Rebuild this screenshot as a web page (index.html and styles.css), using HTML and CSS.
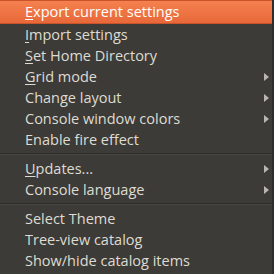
FILE: index.html
```html
<!DOCTYPE html>
<html lang="en">
  <head>
    <meta charset="UTF-8" />
    <title>Menu</title>
    <link rel="stylesheet" href="styles.css">
  </head>
  <body>
    <ul class="menu">
      <li class="item active"><u>E</u>xport current settings</li>
      <li class="item"><u>I</u>mport settings</li>
      <li class="item"><u>S</u>et Home Directory</li>
      <li class="item sub"><u>G</u>rid mode</li>
      <li class="item sub">Change layout</li>
      <li class="item sub">Console window colors</li>
      <li class="item">Enable fire effect</li>
      <li class="sep"></li>
      <li class="item sub"><u>U</u>pdates...</li>
      <li class="item sub">Console language</li>
      <li class="sep"></li>
      <li class="item">Select Theme</li>
      <li class="item">Tree-view catalog</li>
      <li class="item">Show/hide catalog items</li>
    </ul>
  </body>
</html>
```
FILE: styles.css
```css
body {
  margin: 0;
  background: #3c3b37;
}

.menu {
  list-style: none;
  margin: 0;
  padding: 2px 0 0 0;
  width: 272px;
  height: 272px;
  background: #3c3b37;
  border-right: 2px solid #2e2d2a;
  font-family: "Open Sans", "Noto Sans", sans-serif;
  font-size: 14.5px;
  color: #dfdbd2;
}

.item {
  height: 21px;
  line-height: 21px;
  padding-left: 25px;
  position: relative;
}

.item u {
  text-decoration-thickness: 1px;
  text-underline-offset: 2px;
}

.active {
  background: linear-gradient(#f5814f, #e8683a);
  color: #ffffff;
  border-top: 1px solid #c9542a;
  border-bottom: 1px solid #c9542a;
  margin-top: -2px;
  height: 22px;
}

.sub::after {
  content: "";
  position: absolute;
  right: 3px;
  top: 7px;
  border-left: 5px solid #b9b6ae;
  border-top: 4px solid transparent;
  border-bottom: 4px solid transparent;
}

.sep {
  height: 8px;
  position: relative;
}

.sep::before {
  content: "";
  position: absolute;
  left: 0;
  right: 0;
  top: 3px;
  border-top: 1px solid #2e2d2a;
  border-bottom: 1px solid #48473f;
}
```
